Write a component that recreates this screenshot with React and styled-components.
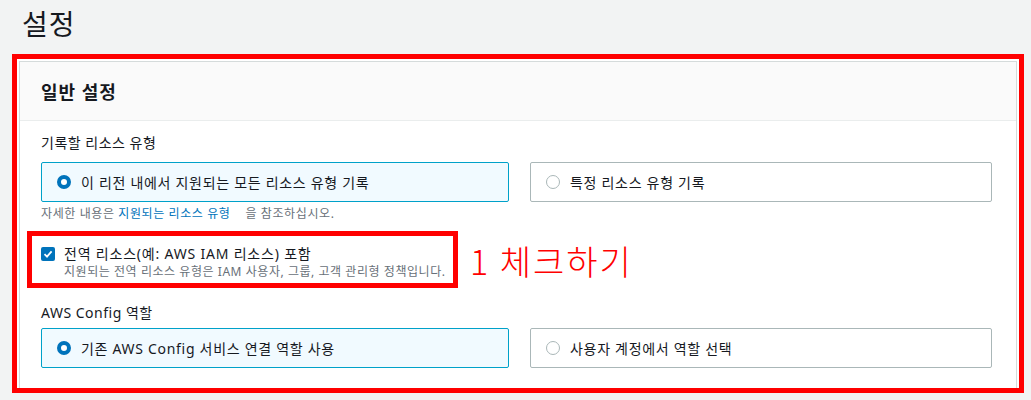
import React from 'react';
import styled, { createGlobalStyle } from 'styled-components';

const GlobalStyle = createGlobalStyle`
  body {
    margin: 0;
    background: #f2f3f3;
    font-family: "Noto Sans", "Noto Sans CJK KR", sans-serif;
    color: #16191f;
  }
`;

const App = () => {
  return (
    <Page>
      <GlobalStyle />
      <PageTitle>설정</PageTitle>
      <Highlight>
        <Card>
          <CardHeader>일반 설정</CardHeader>
          <CardBody>
            <Field>
              <Label>기록할 리소스 유형</Label>
              <Tiles>
                <Tile $selected>
                  <Radio $checked />
                  이 리전 내에서 지원되는 모든 리소스 유형 기록
                </Tile>
                <Tile>
                  <Radio />
                  특정 리소스 유형 기록
                </Tile>
              </Tiles>
              <Hint>
                자세한 내용은 <HintLink>지원되는 리소스 유형</HintLink>
                <Spacer />을 참조하십시오.
              </Hint>
            </Field>

            <CheckRow>
              <NoteBox>
                <Checkbox>
                  <svg width="10" height="10" viewBox="0 0 10 10">
                    <path d="M1.5 5.2 L4 7.6 L8.6 2.4" fill="none" stroke="#fff" strokeWidth="1.8" />
                  </svg>
                </Checkbox>
                <CheckText>
                  <CheckLabel>전역 리소스(예: AWS IAM 리소스) 포함</CheckLabel>
                  <CheckDesc>지원되는 전역 리소스 유형은 IAM 사용자, 그룹, 고객 관리형 정책입니다.</CheckDesc>
                </CheckText>
              </NoteBox>
              <NoteText>1 체크하기</NoteText>
            </CheckRow>

            <Field>
              <Label $tight>AWS Config 역할</Label>
              <Tiles>
                <Tile $selected>
                  <Radio $checked />
                  기존 AWS Config 서비스 연결 역할 사용
                </Tile>
                <Tile>
                  <Radio />
                  사용자 계정에서 역할 선택
                </Tile>
              </Tiles>
            </Field>
          </CardBody>
        </Card>
      </Highlight>
    </Page>
  );
};

export default App;

const Page = styled.div`
  width: 1031px;
  height: 400px;
  overflow: hidden;
`;

const PageTitle = styled.h1`
  margin: 0;
  padding: 4px 0 0 22px;
  height: 54px;
  box-sizing: border-box;
  font-size: 28px;
  font-weight: 400;
  line-height: 40px;
  letter-spacing: 1px;
  color: #16191f;
`;

const Highlight = styled.div`
  margin-left: 12px;
  width: 1012px;
  height: 339px;
  box-sizing: border-box;
  border: 5px solid #ff0000;
  padding: 2px 2px 0 2px;
  background: #fff;
  overflow: hidden;
`;

const Card = styled.div`
  border: 1px solid #d5dbdb;
  background: #fff;
  height: 400px;
`;

const CardHeader = styled.div`
  background: #fafafa;
  border-bottom: 1px solid #eaeded;
  height: 58px;
  padding-left: 21px;
  display: flex;
  align-items: center;
  font-size: 18px;
  font-weight: 700;
  letter-spacing: 1px;
`;

const CardBody = styled.div`
  padding: 12px 24px 0 21px;
`;

const Field = styled.div`
  display: flex;
  flex-direction: column;
`;

const Label = styled.div`
  font-size: 14px;
  line-height: 20px;
  letter-spacing: 0.5px;
  margin-bottom: ${(p) => (p.$tight ? '5px' : '9px')};
`;

const Tiles = styled.div`
  display: grid;
  grid-template-columns: 468px 462px;
  column-gap: 21px;
`;

const Tile = styled.div`
  height: 40px;
  box-sizing: border-box;
  border: 1px solid ${(p) => (p.$selected ? '#00a1c9' : '#aab7b8')};
  background: ${(p) => (p.$selected ? '#f1faff' : '#fff')};
  border-radius: 2px;
  display: flex;
  align-items: center;
  padding-left: 15px;
  font-size: 14px;
  letter-spacing: 0.7px;
  gap: 10px;
`;

const Radio = styled.span`
  width: 14px;
  height: 14px;
  box-sizing: border-box;
  border-radius: 50%;
  flex: none;
  border: ${(p) => (p.$checked ? '4px solid #0073bb' : '1px solid #aab7b8')};
  background: #fff;
`;

const Hint = styled.div`
  font-size: 12px;
  line-height: 18px;
  letter-spacing: 0.6px;
  color: #687078;
  margin-top: 3px;
`;

const HintLink = styled.span`
  color: #0073bb;
`;

const Spacer = styled.span`
  display: inline-block;
  width: 15px;
`;

const CheckRow = styled.div`
  display: flex;
  align-items: center;
  margin: 8px 0 15px -14px;
  gap: 12px;
`;

const NoteBox = styled.div`
  width: 431px;
  height: 57px;
  box-sizing: border-box;
  border: 5px solid #ff0000;
  padding: 8px 0 0 9px;
  display: flex;
  gap: 9px;
`;

const Checkbox = styled.span`
  width: 14px;
  height: 14px;
  margin-top: 3px;
  border-radius: 2px;
  background: #0073bb;
  display: flex;
  align-items: center;
  justify-content: center;
  flex: none;
`;

const CheckText = styled.div`
  display: flex;
  flex-direction: column;
`;

const CheckLabel = styled.div`
  font-size: 14px;
  line-height: 19px;
  letter-spacing: 0.8px;
`;

const CheckDesc = styled.div`
  font-size: 12px;
  line-height: 18px;
  letter-spacing: 0.55px;
  color: #687078;
`;

const NoteText = styled.div`
  font-size: 34px;
  color: #ff0000;
  font-weight: 300;
  font-family: "Noto Sans CJK KR", sans-serif;
  letter-spacing: 2px;
  margin-top: 2px;
`;
